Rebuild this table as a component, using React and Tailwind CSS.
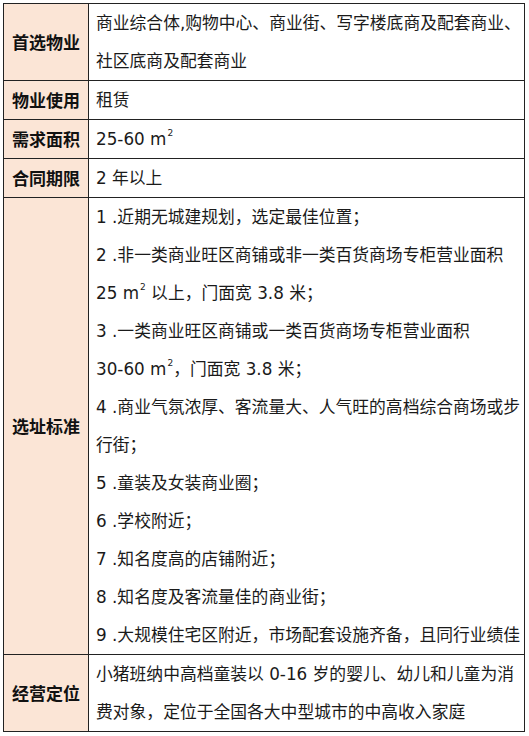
import React from 'react';

const Sq = () => <sup className="text-[9px] align-[5px] ml-[1px]">2</sup>;

const rows = [
  {
    label: '首选物业',
    lines: ['商业综合体,购物中心、商业街、写字楼底商及配套商业、', '社区底商及配套商业'],
  },
  { label: '物业使用', lines: ['租赁'] },
  {
    label: '需求面积',
    lines: [
      <>
        25-60 m<Sq />
      </>,
    ],
  },
  { label: '合同期限', lines: ['2 年以上'] },
  {
    label: '选址标准',
    lines: [
      '1 .近期无城建规划，选定最佳位置；',
      '2 .非一类商业旺区商铺或非一类百货商场专柜营业面积',
      <>
        25 m<Sq /> 以上，门面宽 3.8 米；
      </>,
      '3 .一类商业旺区商铺或一类百货商场专柜营业面积',
      <>
        30-60 m<Sq />，门面宽 3.8 米；
      </>,
      '4 .商业气氛浓厚、客流量大、人气旺的高档综合商场或步',
      '行街；',
      '5 .童装及女装商业圈；',
      '6 .学校附近；',
      '7 .知名度高的店铺附近；',
      '8 .知名度及客流量佳的商业街；',
      '9 .大规模住宅区附近，市场配套设施齐备，且同行业绩佳',
    ],
  },
  {
    label: '经营定位',
    lines: ['小猪班纳中高档童装以 0-16 岁的婴儿、幼儿和儿童为消', '费对象，定位于全国各大中型城市的中高收入家庭'],
  },
];

export default function App() {
  return (
    <div className="bg-white w-[529px] h-[736px] pt-[3px] pl-[3px]">
      <table className="w-[522px] border-collapse border border-[#222] text-[#1a1a1a]">
        <tbody>
          {rows.map((row) => (
            <tr key={row.label}>
              <td
                className="w-[85px] bg-[#fbe5d6] border border-[#222] text-center align-middle font-bold text-[17px] text-[#111]"
                style={{ fontFamily: '"Noto Sans CJK SC", sans-serif' }}
              >
                {row.label}
              </td>
              <td
                className="border border-[#222] pl-[7px] pr-0 align-middle"
                style={{ fontFamily: '"DejaVu Sans", "Noto Sans CJK SC", sans-serif' }}
              >
                {row.lines.map((line, i) => (
                  <div key={i} className="h-[38px] leading-[38px] text-[16.8px] whitespace-nowrap">
                    {line}
                  </div>
                ))}
              </td>
            </tr>
          ))}
        </tbody>
      </table>
    </div>
  );
}
